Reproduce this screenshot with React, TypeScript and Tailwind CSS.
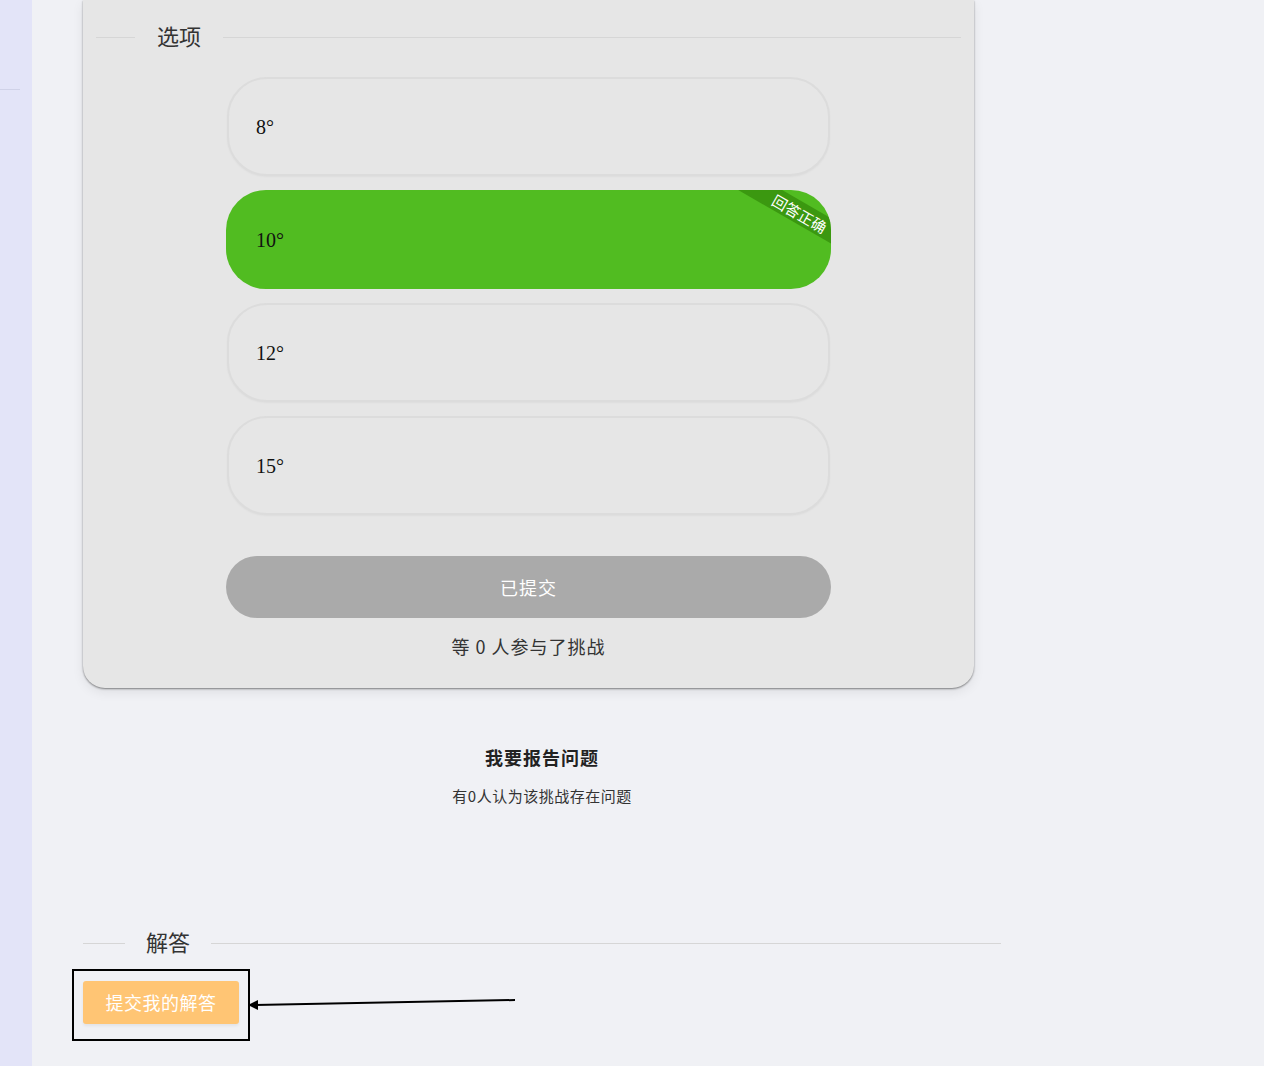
import * as React from 'react';

type Option = {
  label: string;
  correct?: boolean;
};

const options: Option[] = [
  { label: '8°' },
  { label: '10°', correct: true },
  { label: '12°' },
  { label: '15°' },
];

const cjk = { fontFamily: '"Noto Sans CJK SC", "Noto Sans", sans-serif' };
const serif = { fontFamily: '"Liberation Serif", "DejaVu Serif", serif' };

const Divider = ({ title, lead, gap }: { title: string; lead: string; gap: string }) => (
  <div className="flex items-center">
    <div className={`${lead} h-px bg-[#d6d6d6]`} />
    <span className={`${gap} relative -top-[2px] text-[22px] leading-[32px] text-[#333]`}>{title}</span>
    <div className="h-px flex-1 bg-[#d6d6d6]" />
  </div>
);

const OptionRow = ({ option }: { option: Option }) => {
  if (option.correct) {
    return (
      <div className="relative flex h-[99px] items-center overflow-hidden rounded-[40px] bg-[#51bc21] pl-[30px]">
        <span className="text-[20px] text-[#111]" style={serif}>
          {option.label}
        </span>
        <div className="absolute right-[-49px] top-[12px] flex h-[22px] w-[160px] rotate-[30deg] items-center justify-center bg-[#3b9810]">
          <span className="text-[15px] leading-none text-white" style={cjk}>
            回答正确
          </span>
        </div>
      </div>
    );
  }
  return (
    <div className="mx-px flex h-[99px] items-center rounded-[40px] border-2 border-[#dcdcdc] bg-[#e6e6e6] pl-[27px] shadow-[0_1px_2px_rgba(0,0,0,0.04)]">
      <span className="text-[20px] text-[#111]" style={serif}>
        {option.label}
      </span>
    </div>
  );
};

export default function App() {
  return (
    <div className="flex h-[1066px] w-full overflow-hidden bg-[#f0f1f5]" style={cjk}>
      <aside className="w-[32px] shrink-0 bg-[#e3e4f8]">
        <div className="mt-[89px] h-px w-[20px] bg-[#d0d2e8]" />
      </aside>

      <main className="relative flex-1">
        <div className="ml-[51px] w-[918px]">
          <section className="w-[891px] rounded-b-[22px] bg-[#e6e6e6] px-[13px] pb-[28px] pt-[21px] shadow-[0_1px_2px_rgba(0,0,0,0.45),0_4px_12px_rgba(0,0,0,0.08)]">
            <Divider title="选项" lead="w-[39px]" gap="mx-[22px]" />

            <div className="mx-auto mt-[24px] flex w-[605px] flex-col gap-[14px]">
              {options.map((o) => (
                <OptionRow key={o.label} option={o} />
              ))}
            </div>

            <button className="mx-auto mt-[41px] flex h-[62px] w-[605px] items-center justify-center rounded-full bg-[#aaaaaa] text-[18px] tracking-[1px] text-white">
              已提交
            </button>
            <p className="mt-[14px] text-center text-[18px] leading-[28px] tracking-[1px] text-[#333]">等 0 人参与了挑战</p>
          </section>

          <div className="mt-[55px] text-center">
            <h3 className="text-[18px] font-bold leading-[28px] tracking-[1px] text-[#222]">我要报告问题</h3>
            <p className="mt-[15px] text-[15px] leading-[20px] tracking-[0.5px] text-[#333]">有0人认为该挑战存在问题</p>
          </div>

          <div className="mt-[121px]">
            <Divider title="解答" lead="w-[42px]" gap="mx-[21px]" />
          </div>

          <button className="mt-[22px] flex h-[43px] w-[156px] items-center justify-center rounded-[3px] bg-[#ffc574] text-[18px] tracking-[0.5px] text-white shadow-[0_2px_3px_rgba(0,0,0,0.06)]">
            提交我的解答
          </button>
        </div>

        {/* annotation overlay */}
        <div className="absolute left-[40px] top-[969px] h-[72px] w-[178px] border-2 border-black" />
        <svg className="absolute left-[179px] top-[990px]" width="310" height="24" viewBox="0 0 310 24">
          <line x1="304" y1="10" x2="44" y2="15" stroke="#000" strokeWidth="2" />
          <polygon points="37,15 47,10 47,20" fill="#000" />
        </svg>
      </main>
    </div>
  );
}
